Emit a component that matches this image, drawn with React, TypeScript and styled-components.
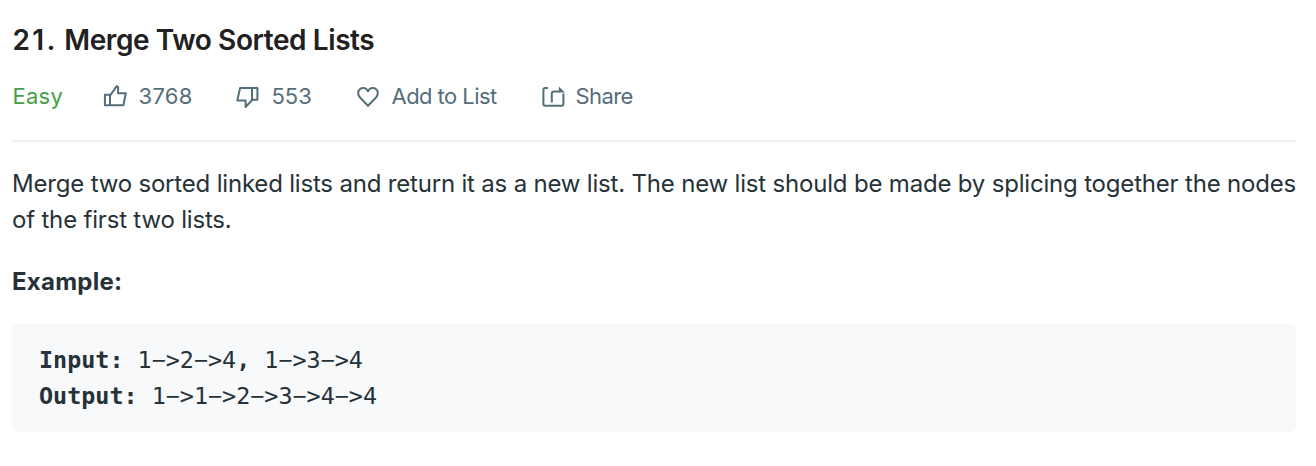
import React from "react";
import styled, { createGlobalStyle } from "styled-components";

const GlobalStyle = createGlobalStyle`
  body {
    margin: 0;
    background: #fff;
    font-family: Inter, "Liberation Sans", sans-serif;
    -webkit-font-smoothing: antialiased;
  }
`;

const Page = styled.main`
  box-sizing: border-box;
  height: 466px;
  padding: 22px 20px 0 12px;
  color: #263238;
  overflow: hidden;
`;

const Title = styled.h1`
  margin: 0;
  font-size: 28px;
  line-height: 36px;
  font-weight: 600;
  letter-spacing: -0.41px;
  color: #212121;
  white-space: nowrap;
`;

const ProblemNumber = styled.span`
  margin-left: 0.5px;
  letter-spacing: 2.3px;
`;

const Toolbar = styled.div`
  display: flex;
  align-items: center;
  height: 46px;
  margin-top: 15px;
  padding-bottom: 21px;
  border-bottom: 2px solid #eee;
  font-size: 22px;
  color: #546e7a;
`;

const Difficulty = styled.span`
  box-sizing: border-box;
  width: 90.5px;
  padding-left: 0.5px;
  color: #43a047;
  letter-spacing: 0.25px;
`;

const Action = styled.button<{ $width: number; $gap?: number; $spacing?: number }>`
  display: flex;
  align-items: center;
  gap: ${(p) => p.$gap ?? 11}px;
  width: ${(p) => p.$width}px;
  padding: 0;
  border: 0;
  background: none;
  color: inherit;
  font: inherit;
  letter-spacing: ${(p) => p.$spacing ?? 0}px;
  white-space: nowrap;
`;

const Icon = styled.svg`
  flex: none;
  width: 24px;
  height: 24px;
  fill: none;
  stroke: currentColor;
  stroke-width: 2;
  stroke-linejoin: round;
`;

const Description = styled.p`
  margin: 24px 0 0;
  font-size: 24px;
  line-height: 36px;
  letter-spacing: -0.188px;
  white-space: nowrap;
`;

const ExampleTitle = styled.h2`
  margin: 26px 0 24px;
  font-size: 24px;
  line-height: 36px;
  font-weight: 700;
  letter-spacing: 0.25px;
`;

const Code = styled.pre`
  margin: 0;
  padding: 18px 27px;
  border-radius: 6px;
  background: #f7f9fa;
  font-family: "DejaVu Sans Mono", monospace;
  font-size: 23.4px;
  line-height: 36px;
`;

export default function App() {
  return (
    <>
      <GlobalStyle />
      <Page>
        <Title>
          <ProblemNumber>21.</ProblemNumber> Merge Two Sorted Lists
        </Title>
        <Toolbar>
          <Difficulty>Easy</Difficulty>
          <Action $width={132} $gap={12} $spacing={0.3}>
            <Icon viewBox="0 0 24 24">
              <path d="M1.9 10.8H7.6L13.7 2.2L15.1 3V9.2H22.8L20.4 21.2H1.9ZM7 10.8V21.2" />
            </Icon>
            3768
          </Action>
          <Action $width={121} $gap={13}>
            <Icon viewBox="0 0 24 24">
              <path d="M22.4 4H5.1L2.3 16.4H10.6V23L17.4 15.7H22.4ZM17 4V15.7" />
            </Icon>
            553
          </Action>
          <Action $width={185} $gap={12} $spacing={-0.55}>
            <Icon viewBox="0 0 24 24">
              <path d="M12 21.8L4 13.5C1.5 10.9 1.7 7.1 3.9 5.2C6.3 3.2 10.3 3.5 12 7.3C13.7 3.5 17.7 3.2 20.1 5.2C22.3 7.1 22.5 10.9 20 13.5Z" />
            </Icon>
            Add to List
          </Action>
          <Action $width={100} $spacing={-0.6}>
            <Icon viewBox="0 0 24 24">
              <path d="M7 4H4.2Q2.4 4 2.4 5.8V20Q2.4 21.8 4.2 21.8H20.8Q22.4 21.8 22.4 20V9.5" />
              <path d="M10.8 18.6V9.6Q10.8 7.4 13 7.4H19" />
              <path d="M17.8 2.6L23.8 8.4H17.8Z" fill="currentColor" stroke="none" />
            </Icon>
            Share
          </Action>
        </Toolbar>
        <Description>
          Merge two sorted linked lists and return it as a new list. The new list should be made by splicing together the nodes
          <br />
          of the first two lists.
        </Description>
        <ExampleTitle>Example:</ExampleTitle>
        <Code>
          <b>Input:</b>{" 1−>2−>4"}
          <b>,</b>{" 1−>3−>4\n"}
          <b>Output:</b>{" 1−>1−>2−>3−>4−>4"}
        </Code>
      </Page>
    </>
  );
}
